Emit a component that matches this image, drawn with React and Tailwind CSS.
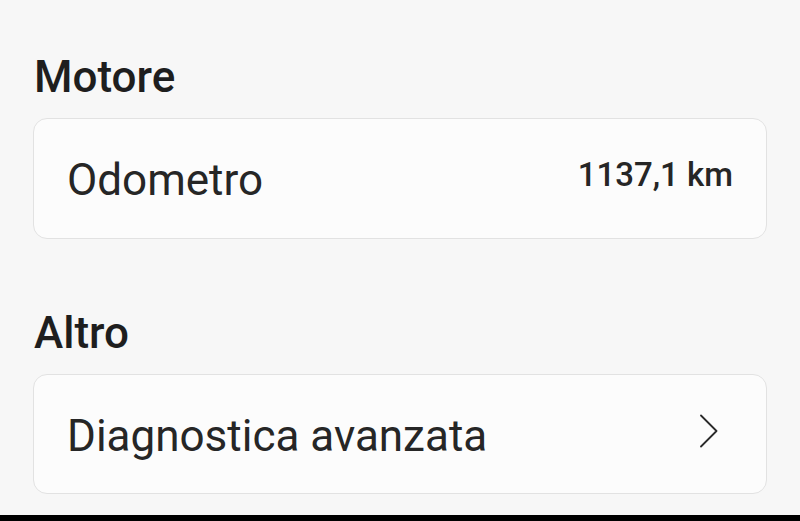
function ChevronRight() {
  return (
    <svg width="18" height="34" viewBox="0 0 18 34" fill="none">
      <path d="M1 1.5 L16.5 17 L1 32.5" stroke="#2a2a2a" strokeWidth="1.8" strokeLinecap="round" strokeLinejoin="round" />
    </svg>
  );
}

function Section({ title, className, children }) {
  return (
    <section className={className}>
      <h2 className="px-[34px] text-[44px] leading-none font-medium text-[#1e1e1e] mb-[19px]">
        {title}
      </h2>
      {children}
    </section>
  );
}

export default function App() {
  return (
    <div
      className="w-[800px] h-[521px] bg-[#f7f7f7] flex flex-col overflow-hidden"
      style={{ fontFamily: "Roboto, 'Open Sans', sans-serif" }}
    >
      <Section title="Motore" className="pt-[55px]">
        <div className="mx-[33px] h-[121px] rounded-[14px] border-[1.5px] border-[#e2e2e2] bg-[#fcfcfc] flex items-center justify-between pl-[33px] pr-[33px]">
          <span className="text-[44px] leading-none text-[#262626] mt-[3px]">Odometro</span>
          <span className="text-[33px] leading-none font-medium text-[#262626] -mt-[8px]">1137,1 km</span>
        </div>
      </Section>

      <Section title="Altro" className="mt-[72px]">
        <div className="mx-[33px] h-[120px] rounded-[14px] border-[1.5px] border-[#e2e2e2] bg-[#fcfcfc] flex items-center justify-between pl-[33px] pr-[48px]">
          <span className="text-[44px] leading-none text-[#262626] mt-[3px]">Diagnostica avanzata</span>
          <span className="-mt-[6px]">
            <ChevronRight />
          </span>
        </div>
      </Section>

      <div className="mt-auto h-[6px] bg-black" />
    </div>
  );
}
